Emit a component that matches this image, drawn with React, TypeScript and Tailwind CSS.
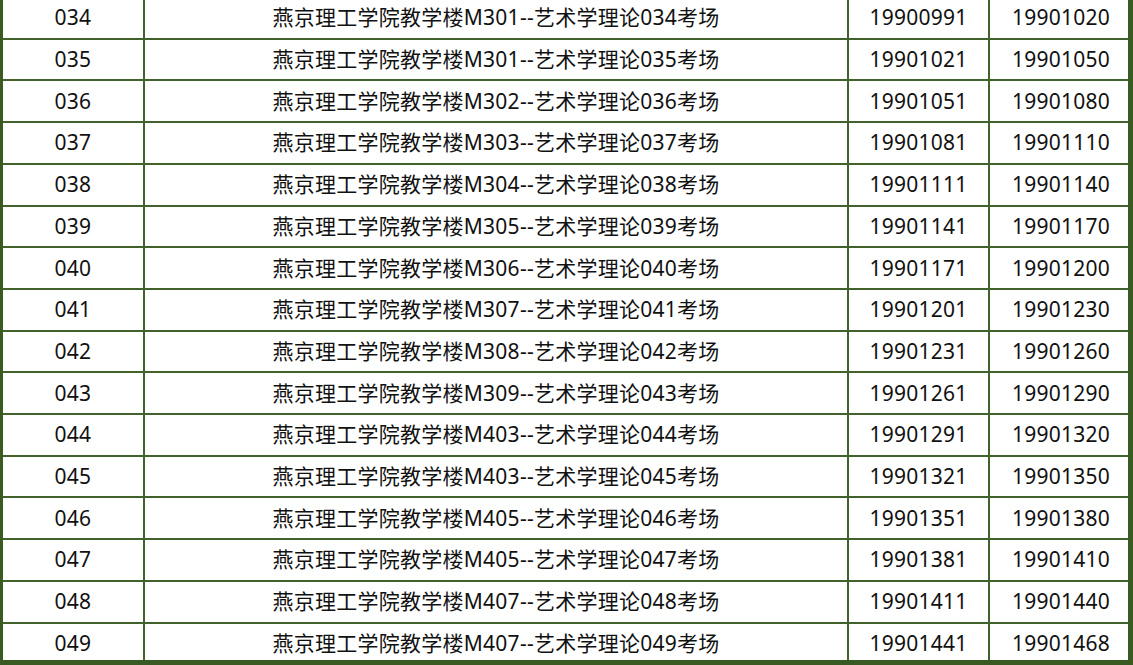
const rows: [string, string, string, string][] = [
  ["034", "M301", "19900991", "19901020"],
  ["035", "M301", "19901021", "19901050"],
  ["036", "M302", "19901051", "19901080"],
  ["037", "M303", "19901081", "19901110"],
  ["038", "M304", "19901111", "19901140"],
  ["039", "M305", "19901141", "19901170"],
  ["040", "M306", "19901171", "19901200"],
  ["041", "M307", "19901201", "19901230"],
  ["042", "M308", "19901231", "19901260"],
  ["043", "M309", "19901261", "19901290"],
  ["044", "M403", "19901291", "19901320"],
  ["045", "M403", "19901321", "19901350"],
  ["046", "M405", "19901351", "19901380"],
  ["047", "M405", "19901381", "19901410"],
  ["048", "M407", "19901411", "19901440"],
  ["049", "M407", "19901441", "19901468"],
];

function Row({ no, room, from, to }: { no: string; room: string; from: string; to: string }) {
  return (
    <div className="flex h-[41.714px] shrink-0 border-b-2 border-[#42622c]">
      <div className="w-[142px] shrink-0 flex items-center justify-center border-r-2 border-[#42622c]">
        {no}
      </div>
      <div className="w-[704px] shrink-0 flex items-center justify-center border-r-2 border-[#42622c]">
        燕京理工学院教学楼{room}--艺术学理论{no}考场
      </div>
      <div className="w-[141px] shrink-0 flex items-center justify-center border-r-2 border-[#42622c]">
        {from}
      </div>
      <div className="flex-1 flex items-center justify-center pl-[4px]">{to}</div>
    </div>
  );
}

export default function App() {
  return (
    <div
      className="w-[1133px] h-[665px] overflow-hidden bg-white border-l-[3px] border-r-[5px] border-b-[5px] border-[#3a5a24] text-[21px] tracking-[0.25px] text-[#111] leading-none"
      style={{ fontFamily: '"Noto Sans", "Noto Sans CJK SC", sans-serif' }}
    >
      <div className="flex flex-col mt-[-2px]">
        {rows.map(([no, room, from, to]) => (
          <Row key={no} no={no} room={room} from={from} to={to} />
        ))}
      </div>
    </div>
  );
}
